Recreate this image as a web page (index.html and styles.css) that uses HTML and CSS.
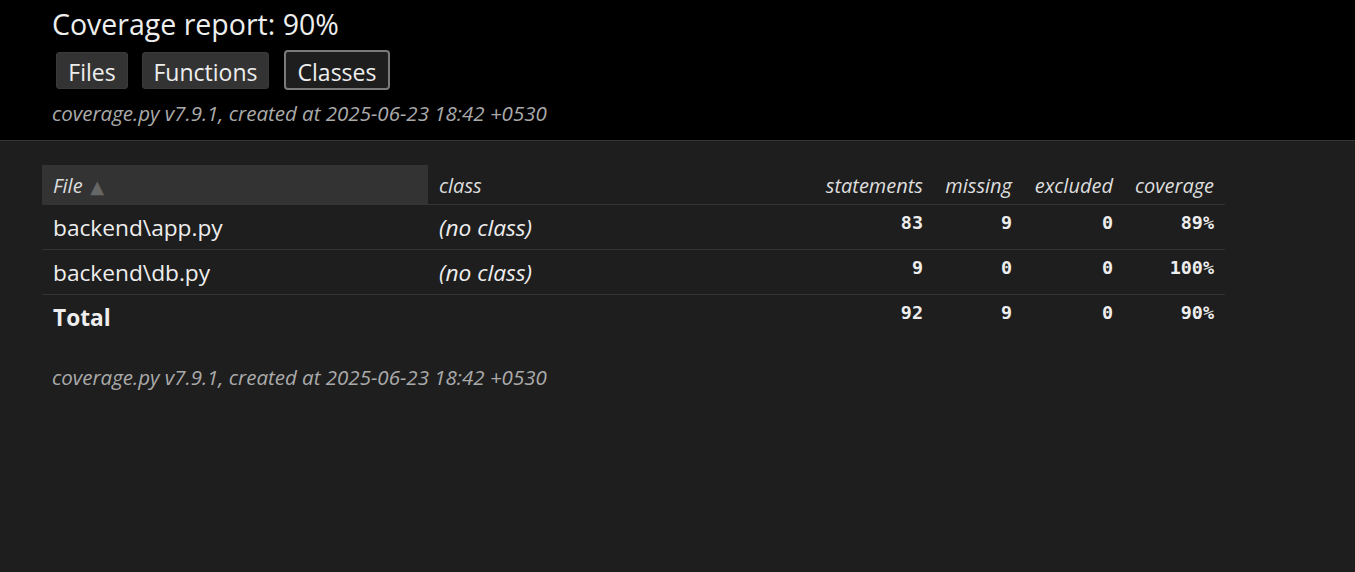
FILE: index.html
```html
<!DOCTYPE html>
<html lang="en">
<head>
<meta charset="utf-8">
<title>Coverage report</title>
<link rel="stylesheet" href="styles.css">
</head>
<body>
<header class="page-header">
  <div class="header-content">
    <h1 class="title">Coverage report: <span class="pc">90%</span></h1>
    <nav class="tabs">
      <a class="button btn-files" href="#">Files</a>
      <a class="button btn-functions" href="#">Functions</a>
      <a class="button btn-classes current" href="#">Classes</a>
    </nav>
    <p class="meta">coverage.py v7.9.1, created at 2025-06-23 18:42 +0530</p>
  </div>
</header>
<main class="index">
  <table class="report">
    <colgroup>
      <col class="c-name"><col class="c-class"><col class="c-stmt"><col class="c-miss"><col class="c-excl"><col class="c-cov">
    </colgroup>
    <thead>
      <tr>
        <th class="name sorted">File<span class="arrows"> ▲</span></th>
        <th class="name">class</th>
        <th class="num">statements</th>
        <th class="num">missing</th>
        <th class="num">excluded</th>
        <th class="num">coverage</th>
      </tr>
    </thead>
    <tbody>
      <tr>
        <td class="name">backend\app.py</td>
        <td class="name noun">(no class)</td>
        <td class="num">83</td>
        <td class="num">9</td>
        <td class="num">0</td>
        <td class="num">89%</td>
      </tr>
      <tr>
        <td class="name">backend\db.py</td>
        <td class="name noun">(no class)</td>
        <td class="num">9</td>
        <td class="num">0</td>
        <td class="num">0</td>
        <td class="num">100%</td>
      </tr>
    </tbody>
    <tfoot>
      <tr class="total">
        <td class="name">Total</td>
        <td class="name">&nbsp;</td>
        <td class="num">92</td>
        <td class="num">9</td>
        <td class="num">0</td>
        <td class="num">90%</td>
      </tr>
    </tfoot>
  </table>
  <footer class="page-footer">
    <p class="meta">coverage.py v7.9.1, created at 2025-06-23 18:42 +0530</p>
  </footer>
</main>
</body>
</html>
```
FILE: styles.css
```css
html, body, h1, p, table, td, th {
  margin: 0;
  padding: 0;
  border: 0;
}
body {
  font-family: "Open Sans", "Noto Sans", sans-serif;
  background: #1e1e1e;
  color: #eee;
  font-size: 20px;
}
.page-header {
  background: #000;
  border-bottom: 1px solid #333;
  height: 141px;
  box-sizing: border-box;
}
.header-content {
  padding: 7px 0 0 52px;
  display: flex;
  flex-direction: column;
  align-items: flex-start;
}
.title {
  font-weight: normal;
  font-size: 28.5px;
  line-height: 34px;
  height: 34px;
}
.tabs {
  display: flex;
  align-items: center;
  gap: 14px;
  margin: 9px 0 0 4px;
  height: 40px;
}
.button {
  display: flex;
  align-items: center;
  justify-content: center;
  box-sizing: border-box;
  height: 37px;
  padding-top: 3px;
  background: #333;
  border: 1px solid #3a3a3a;
  border-radius: 3px;
  color: #eee;
  text-decoration: none;
  font-size: 23px;
}
.btn-files { width: 72px; }
.btn-functions { width: 127px; }
.btn-classes { width: 106px; margin-left: 1px; }
.button.current {
  height: 40px;
  background: #1e1e1e;
  border: 2px solid #7a7a7a;
  border-radius: 4px;
}
.meta {
  font-style: italic;
  color: #aaa;
  font-size: 20.5px;
  line-height: 28px;
}
.page-header .meta {
  margin-top: 9px;
}
.index {
  padding: 24px 0 0 42px;
}
.report {
  border-collapse: collapse;
  table-layout: fixed;
  width: 1183px;
}
.c-name, .c-class { width: 386px; }
.c-stmt { width: 120px; }
.c-miss { width: 89px; }
.c-excl, .c-cov { width: 101px; }
.report th, .report td {
  padding: 0 11px;
  border-bottom: 1px solid #333;
  text-align: right;
  vertical-align: top;
  white-space: nowrap;
}
.report th {
  font-style: italic;
  font-weight: normal;
  color: #ddd;
  font-size: 20px;
  height: 39px;
  line-height: 28px;
  padding-top: 7px;
  box-sizing: border-box;
}
.report th.name, .report td.name {
  text-align: left;
}
.report th.sorted {
  background: #333;
}
.arrows {
  color: #666;
  font-size: 90%;
  font-style: normal;
  font-family: "DejaVu Sans", sans-serif;
  margin-left: 2px;
}
.report td {
  height: 45px;
  box-sizing: border-box;
}
.report td.name {
  font-size: 22.7px;
  line-height: 30px;
  padding-top: 8px;
}
.report td.noun {
  font-style: italic;
}
.report td.num {
  font-family: "DejaVu Sans Mono", monospace;
  font-weight: bold;
  font-size: 18.4px;
  line-height: 24px;
  padding-top: 6px;
}
.report tr.total td {
  border-bottom: none;
}
.report tr.total td.name {
  font-weight: bold;
}
.page-footer {
  margin: 24px 0 0 10px;
}
```
